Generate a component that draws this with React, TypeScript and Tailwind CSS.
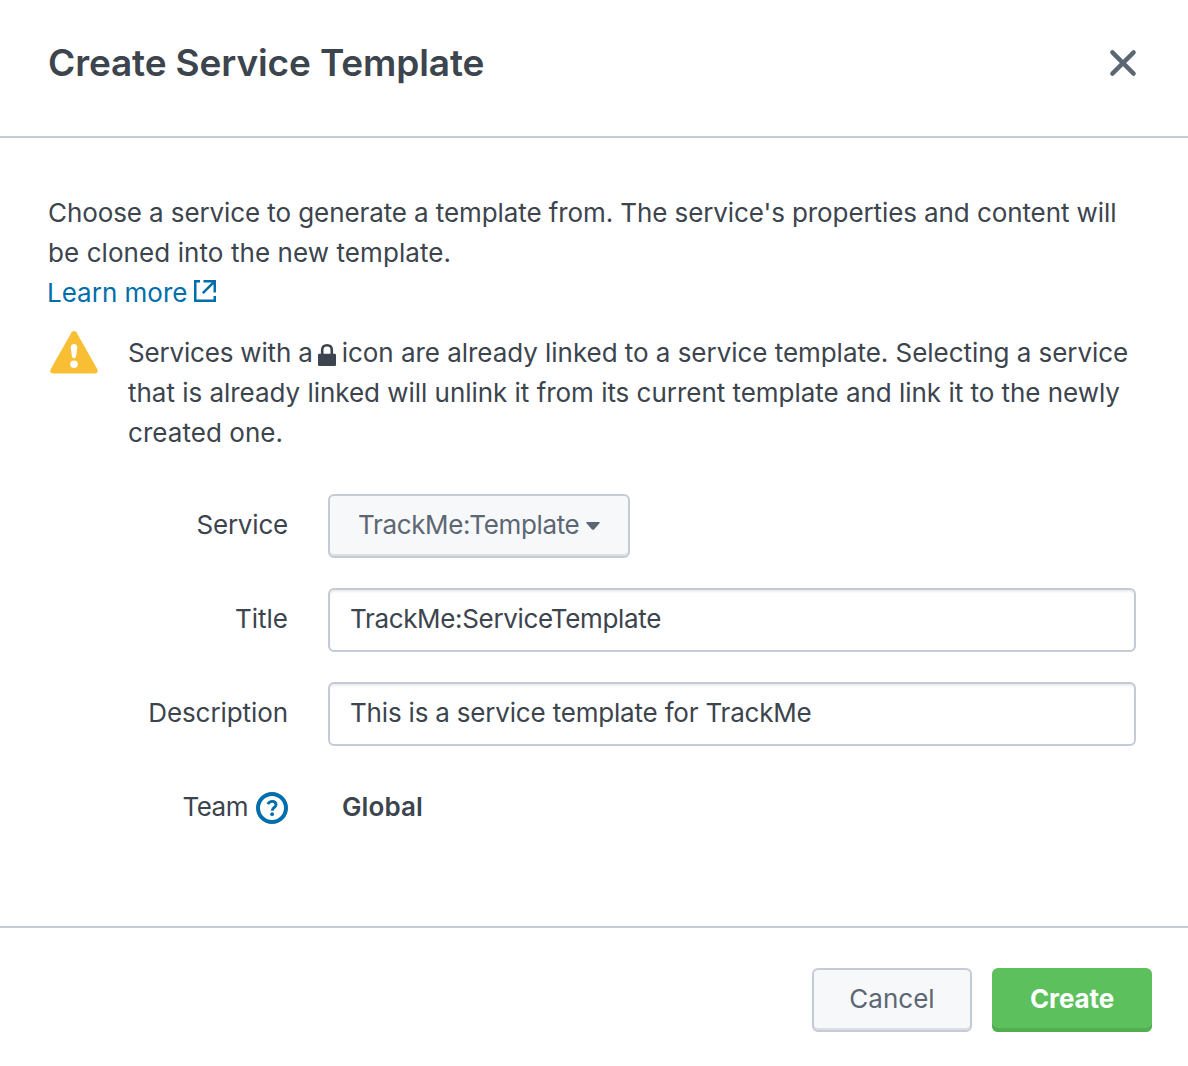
import type { ReactNode } from 'react';

function Field({ label, children }: { label: ReactNode; children: ReactNode }) {
  return (
    <div className="flex h-16 items-center">
      <div className="mr-10 flex w-60 shrink-0 items-center justify-end">{label}</div>
      {children}
    </div>
  );
}

function CloseIcon() {
  return (
    <svg width="28" height="28" viewBox="0 0 28 28" fill="none" stroke="#5c6773" strokeWidth="4.4" strokeLinecap="round">
      <path d="M3.4 3.4 24.6 24.6M24.6 3.4 3.4 24.6" />
    </svg>
  );
}

function ExternalIcon() {
  return (
    <svg className="ml-[7px]" width="22" height="22" viewBox="0 0 22 22" fill="none" stroke="#006eaa" strokeWidth="2.5">
      <path d="M6 1.25H1.25V20.75H20.75V16" />
      <path d="M9.5 1.25H20.75V12.5M20.4 1.6 8.8 13.2" />
    </svg>
  );
}

function WarningIcon() {
  return (
    <svg width="48" height="43" viewBox="0 0 48 43">
      <path d="M21.6 1.3Q24-1.2 26.4 1.3L47.2 38Q49 42 44.5 42.6H3.5Q-1 42 .8 38Z" fill="#f8be34" />
      <path d="M20.7 16.5Q20.7 13 24 13T27.3 16.5L26.1 25.3Q25.7 27.2 24 27.2T21.9 25.3Z" fill="white" />
      <circle cx="24" cy="33.3" r="3.8" fill="white" />
    </svg>
  );
}

function LockIcon() {
  return (
    <svg className="mr-[6px] ml-[5px] inline-block align-[-4px]" width="18" height="22" viewBox="0 0 18 22">
      <path d="M4.2 11V6Q4.2 1.3 9 1.3T13.8 6V11" fill="none" stroke="#3c444d" strokeWidth="2.6" />
      <path d="M1.2 9.7H16.8Q18 9.7 18 10.9V20.8Q18 22 16.8 22H1.2Q0 22 0 20.8V10.9Q0 9.7 1.2 9.7Z" fill="#3c444d" />
    </svg>
  );
}

function HelpIcon() {
  return (
    <svg className="ml-2" width="32" height="32" viewBox="0 0 32 32" fill="none" stroke="#006eaa">
      <circle cx="16" cy="16" r="14" strokeWidth="4" />
      <path d="M11.9 12.1Q13.2 9.4 16.2 9.4C18.5 9.4 20 10.7 20 12.7C20 15.5 16.2 15.5 16.2 18.8" strokeWidth="2.9" />
      <circle cx="16.1" cy="22.2" r="1.9" fill="#006eaa" stroke="none" />
    </svg>
  );
}

const inputClass =
  'h-16 w-[808px] rounded-md border-2 border-[#c3cbd4] bg-white px-5 pb-1 text-[26px] text-[#3c444d] shadow-[inset_0_2px_2px_rgba(0,0,0,0.08)] outline-none';

export default function App() {
  return (
    <div className="flex h-[1066px] w-[1188px] flex-col bg-white font-['Inter',sans-serif] text-[26px] leading-10 text-[#3c444d] [font-feature-settings:'calt'_0]">
      <header className="flex h-[138px] items-start justify-between border-b-2 border-[#c3cbd4] pt-[43px] pr-[51px] pl-12">
        <h1 className="text-[37px] leading-10 font-semibold tracking-[-0.13px]">Create Service Template</h1>
        <button className="mt-[6px]" aria-label="Close"><CloseIcon /></button>
      </header>

      <main className="flex-1 pt-[55px] pl-12">
        <p className="whitespace-nowrap">
          <span className="tracking-[-0.095px]">Choose a service to generate a template from. The service's properties and content will</span>
          <br />
          <span className="tracking-[0.08px]">be cloned into the new template.</span>
        </p>
        <a className="flex w-fit items-center text-[#006eaa]" href="#">
          <span className="-ml-px">Learn more</span>
          <span className="mb-1"><ExternalIcon /></span>
        </a>
        <div className="mt-5 flex">
          <div className="mt-[-2px] ml-[2px] w-[78px] shrink-0"><WarningIcon /></div>
          <p className="whitespace-nowrap">
            <span className="tracking-[-0.18px]">Services with a</span>
            <LockIcon />
            <span className="tracking-[-0.04px]">icon are already linked to a service template. Selecting a service</span>
            <br />
            <span className="tracking-[-0.03px]">that is already linked will unlink it from its current template and link it to the newly</span>
            <br />
            <span className="tracking-[0.05px]">created one.</span>
          </p>
        </div>

        <form className="mt-[41px] flex flex-col gap-[30px]">
          <Field label={<span className="pb-[2px] tracking-[-0.2px]">Service</span>}>
            <button type="button" className="flex h-16 w-[302px] items-center rounded-md border-2 border-[#c3cbd4] bg-[#f7f8fa] pb-[2px] pl-7 text-[#5c6773] shadow-[inset_0_-2px_0_#dcdfe2]">
              <span className="tracking-[-0.35px]">TrackMe:Template</span>
              <svg className="mt-px ml-[7px]" width="14" height="8" viewBox="0 0 14 8" fill="#5c6773">
                <path d="M1 0H13Q14.4.2 13.5 1.2L8 7.4Q7 8.3 6 7.4L.5 1.2Q-.4.2 1 0Z" />
              </svg>
            </button>
          </Field>
          <Field label={<label htmlFor="title" className="pb-[2px]">Title</label>}>
            <input id="title" className={`${inputClass} tracking-[-0.34px]`} defaultValue="TrackMe:ServiceTemplate" />
          </Field>
          <Field label={<label htmlFor="description" className="pb-[2px] tracking-[-0.08px]">Description</label>}>
            <input id="description" className={`${inputClass} tracking-[-0.19px]`} defaultValue="This is a service template for TrackMe" />
          </Field>
          <Field label={<><span className="pb-[2px] tracking-[-0.5px]">Team</span><HelpIcon /></>}>
            <span className="ml-[14px] pb-[2px] font-semibold tracking-[0.1px]">Global</span>
          </Field>
        </form>
      </main>

      <footer className="flex h-[140px] items-start justify-end gap-5 border-t-2 border-[#c3cbd4] pt-10 pr-9">
        <button className="h-16 w-40 rounded-md border-2 border-[#c3cbd4] bg-[#f7f8fa] pb-[2px] text-[#5c6773] shadow-[inset_0_-2px_0_#dcdfe2]">Cancel</button>
        <button className="h-16 w-40 rounded-md bg-[#5cc05c] pb-[2px] font-bold tracking-[-0.1px] text-white shadow-[inset_0_-4px_0_#53ad53]">Create</button>
      </footer>
    </div>
  );
}
